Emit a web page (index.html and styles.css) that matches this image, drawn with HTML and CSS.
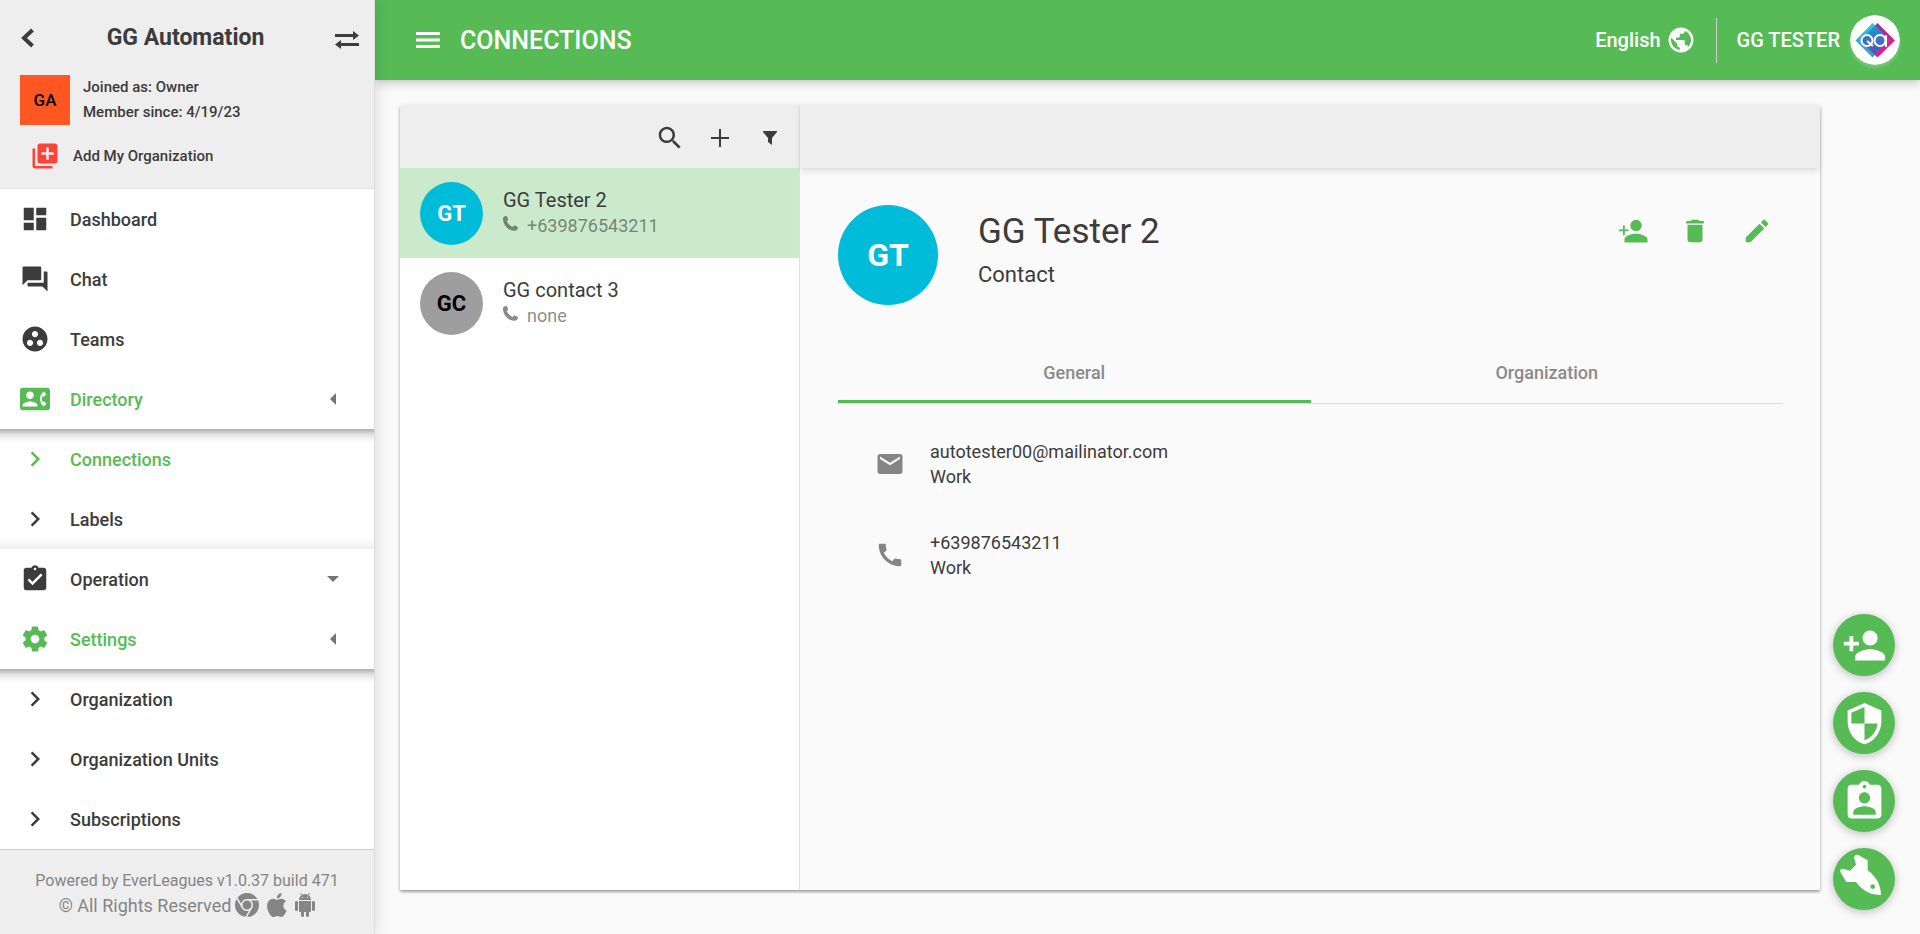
FILE: index.html
```html
<!DOCTYPE html>
<html lang="en">
<head>
<meta charset="utf-8">
<title>Connections</title>
<link rel="stylesheet" href="styles.css">
</head>
<body>
<svg class="defs" aria-hidden="true">
  <symbol id="chevron" viewBox="0 0 24 24"><path d="M8.59 16.59 13.17 12 8.59 7.41 10 6l6 6-6 6z"/></symbol>
  <symbol id="person-add" viewBox="0 0 24 24"><path d="M15 12c2.21 0 4-1.79 4-4s-1.79-4-4-4-4 1.79-4 4 1.79 4 4 4zm-9-2V7H4v3H1v2h3v3h2v-3h3v-2H6zm9 4c-2.67 0-8 1.34-8 4v2h16v-2c0-2.66-5.33-4-8-4z"/></symbol>
  <symbol id="handset" viewBox="0 0 15 15"><path d="M1.200.5 3.200 0c.4-.1.7.1.9.5l1 2.700c.1.4 0 .7-.3 1L3.800 5.300c1.100 2.300 3.100 4.400 5.800 5.700l1.200-1.300c.3-.3.6-.4 1-.2l2.600 1.300c.4.2.6.5.5.9-.3 1.300-1 2.400-2.300 2.800C6.500 16 .2 9.500 0 3.200 0 1.800.3 1 1.200.5z"/></symbol>
</svg>
<div class="app">
  <aside class="sidebar">
    <div class="org">
      <div class="org-top">
        <button class="icon-btn" aria-label="Back"><svg width="16" height="20" viewBox="0 0 16 20"><path d="M12.500 2 4 10l8.500 8" fill="none" stroke="currentColor" stroke-width="4"/></svg></button>
        <h1 class="org-name">GG Automation</h1>
        <button class="icon-btn swap" aria-label="Switch organization"><svg width="24" height="18" viewBox="0 0 24 18"><path d="M0 3h18V0l6 4.500L18 9V6H0zM24 15H6v3l-6-4.500L6 9v3h18z"/></svg></button>
      </div>
      <div class="org-info">
        <div class="org-logo">GA</div>
        <div class="org-meta"><div>Joined as: Owner</div><div>Member since: 4/19/23</div></div>
      </div>
      <button class="add-org"><svg width="30" height="30" viewBox="0 0 24 24"><path d="M4 6H2v14c0 1.100.9 2 2 2h14v-2H4V6zm16-4H8c-1.100 0-2 .9-2 2v12c0 1.100.9 2 2 2h12c1.100 0 2-.9 2-2V4c0-1.100-.9-2-2-2zm-1 9h-4v4h-2v-4H9V9h4V5h2v4h4v2z"/></svg><span>Add My Organization</span></button>
    </div>
    <nav class="nav">
      <a class="nav-item" href="#"><svg class="ico" viewBox="0 0 24 24"><path d="M3 13h8V3H3v10zm0 8h8v-6H3v6zm10 0h8V11h-8v10zm0-18v6h8V3h-8z"/></svg>Dashboard</a>
      <a class="nav-item" href="#"><svg class="ico" viewBox="0 0 24 24"><path d="M21 6h-2v9H6v2c0 .55.45 1 1 1h11l4 4V7c0-.55-.45-1-1-1zm-4 6V3c0-.55-.45-1-1-1H3c-.55 0-1 .45-1 1v14l4-4h10c.55 0 1-.45 1-1z"/></svg>Chat</a>
      <a class="nav-item" href="#"><svg class="ico" viewBox="0 0 24 24"><path d="M12 2C6.480 2 2 6.480 2 12s4.480 10 10 10 10-4.480 10-10S17.520 2 12 2zM8 17.500c-1.380 0-2.500-1.120-2.500-2.500s1.120-2.500 2.500-2.500 2.500 1.120 2.500 2.500-1.120 2.500-2.500 2.500zM9.500 8c0-1.380 1.120-2.500 2.500-2.500s2.500 1.120 2.500 2.500-1.120 2.500-2.500 2.500S9.500 9.380 9.500 8zm6.500 9.500c-1.380 0-2.500-1.120-2.500-2.500s1.120-2.500 2.500-2.500 2.500 1.120 2.500 2.500-1.120 2.500-2.500 2.500z"/></svg>Teams</a>
      <a class="nav-item active" href="#"><svg class="ico" viewBox="0 0 24 24"><path d="M22 3H2C.9 3 0 3.900 0 5v14c0 1.100.9 2 2 2h20c1.100 0 1.990-.9 1.990-2L24 5c0-1.100-.9-2-2-2zM8 6c1.660 0 3 1.340 3 3s-1.340 3-3 3-3-1.340-3-3 1.340-3 3-3zm6 12H2v-1c0-2 4-3.100 6-3.100s6 1.100 6 3.100v1zm3.850-4h1.640L21 16l-1.990 1.990c-1.310-.98-2.280-2.380-2.730-3.990-.18-.64-.28-1.310-.28-2s.1-1.360.28-2c.45-1.620 1.420-3.010 2.730-3.990L21 8l-1.510 2h-1.640c-.22.63-.35 1.300-.35 2s.13 1.370.35 2z"/></svg>Directory<svg class="caret" viewBox="0 0 12 12"><path d="M9 0v12L3 6z"/></svg></a>
      <div class="subnav">
        <a class="nav-item active" href="#"><svg class="ico"><use href="#chevron"/></svg>Connections</a>
        <a class="nav-item" href="#"><svg class="ico"><use href="#chevron"/></svg>Labels</a>
      </div>
      <a class="nav-item" href="#"><svg class="ico" viewBox="0 0 24 24"><path d="M19 3h-4.180C14.400 1.840 13.300 1 12 1c-1.300 0-2.400.84-2.820 2H5c-1.100 0-2 .9-2 2v14c0 1.100.9 2 2 2h14c1.100 0 2-.9 2-2V5c0-1.100-.9-2-2-2zm-7 0c.55 0 1 .45 1 1s-.45 1-1 1-1-.45-1-1 .45-1 1-1zm-2 14-4-4 1.410-1.410L10 14.170l6.590-6.590L18 9l-8 8z"/></svg>Operation<svg class="caret" viewBox="0 0 12 12"><path d="M0 3h12L6 9z"/></svg></a>
      <a class="nav-item active" href="#"><svg class="ico" viewBox="0 0 24 24"><path d="M19.430 12.980c.04-.32.07-.64.07-.98s-.03-.66-.07-.98l2.110-1.650c.19-.15.24-.42.12-.64l-2-3.460c-.12-.22-.39-.3-.61-.22l-2.490 1c-.52-.4-1.080-.73-1.690-.98l-.38-2.650C14.460 2.180 14.250 2 14 2h-4c-.25 0-.46.18-.49.42l-.38 2.650c-.61.25-1.170.59-1.690.98l-2.490-1c-.23-.09-.49 0-.61.22l-2 3.460c-.13.22-.07.49.12.64l2.110 1.650c-.04.32-.07.65-.07.98s.03.66.07.98l-2.110 1.650c-.19.15-.24.42-.12.64l2 3.460c.12.22.39.3.61.22l2.490-1c.52.4 1.080.73 1.690.98l.38 2.650c.03.24.24.42.49.42h4c.25 0 .46-.18.49-.42l.38-2.650c.61-.25 1.170-.59 1.690-.98l2.490 1c.23.09.49 0 .61-.22l2-3.460c.12-.22.07-.49-.12-.64l-2.110-1.650zM12 15.500c-1.930 0-3.500-1.570-3.500-3.500s1.570-3.500 3.500-3.500 3.500 1.570 3.500 3.500-1.570 3.500-3.500 3.500z"/></svg>Settings<svg class="caret" viewBox="0 0 12 12"><path d="M9 0v12L3 6z"/></svg></a>
      <div class="subnav">
        <a class="nav-item" href="#"><svg class="ico"><use href="#chevron"/></svg>Organization</a>
        <a class="nav-item" href="#"><svg class="ico"><use href="#chevron"/></svg>Organization Units</a>
        <a class="nav-item" href="#"><svg class="ico"><use href="#chevron"/></svg>Subscriptions</a>
      </div>
    </nav>
    <footer class="foot">
      <div class="foot-version">Powered by EverLeagues v1.0.37 build 471</div>
      <div class="foot-rights"><span>© All Rights Reserved</span>
        <span class="platforms">
          <svg width="24" height="24" viewBox="4 4 16 16"><path d="M12 20l3.460-6h-.01c.34-.6.55-1.270.55-2 0-1.200-.54-2.270-1.380-3h4.790c.38.930.59 1.940.59 3a8 8 0 0 1-8 8M4 12c0-1.460.39-2.820 1.070-4l3.470 6h.01c.69 1.190 1.950 2 3.450 2 .45 0 .88-.09 1.290-.23l-2.400 4.140C7 19.370 4 16.040 4 12m11 0a3 3 0 1 1-6 0 3 3 0 0 1 6 0m-3-8c2.960 0 5.540 1.610 6.920 4H12c-1.940 0-3.550 1.380-3.920 3.210L5.700 7.080C7.160 5.210 9.440 4 12 4"/></svg>
          <svg width="20" height="24" viewBox="4 2 16.200 20"><path d="M18.710 19.500C17.880 20.740 17 21.950 15.660 21.970C14.320 22 13.890 21.180 12.370 21.180C10.840 21.180 10.370 21.950 9.100 22C7.790 22.050 6.800 20.680 5.960 19.470C4.250 17 2.940 12.450 4.700 9.390C5.570 7.870 7.130 6.910 8.820 6.880C10.100 6.860 11.320 7.750 12.110 7.750C12.890 7.750 14.370 6.680 15.920 6.840C16.570 6.870 18.390 7.100 19.560 8.820C19.470 8.880 17.390 10.100 17.410 12.630C17.440 15.650 20.060 16.660 20.090 16.670C20.060 16.740 19.670 18.110 18.710 19.500M13 3.500C13.730 2.670 14.940 2.040 15.940 2C16.070 3.170 15.600 4.350 14.900 5.190C14.210 6.040 13.070 6.700 11.950 6.610C11.800 5.460 12.360 4.260 13 3.500Z"/></svg>
          <svg width="20" height="24" viewBox="2 0 20 24"><path d="M6 18c0 .55.45 1 1 1h1v3.500c0 .83.67 1.500 1.500 1.500s1.500-.67 1.500-1.500V19h2v3.500c0 .83.67 1.500 1.500 1.500s1.500-.67 1.500-1.500V19h1c.55 0 1-.45 1-1V8H6v10zM3.500 8C2.670 8 2 8.670 2 9.500v7c0 .83.67 1.500 1.500 1.500S5 17.330 5 16.500v-7C5 8.670 4.330 8 3.500 8zm17 0c-.83 0-1.500.67-1.500 1.500v7c0 .83.67 1.500 1.500 1.500s1.500-.67 1.500-1.500v-7c0-.83-.67-1.500-1.500-1.500zm-4.970-5.840l1.300-1.300c.2-.2.2-.51 0-.71-.2-.2-.51-.2-.71 0l-1.480 1.480C13.850 1.230 12.950 1 12 1c-.96 0-1.860.23-2.660.63L7.850.15c-.2-.2-.51-.2-.71 0-.2.2-.2.51 0 .71l1.310 1.310C6.970 3.260 6 5.010 6 7h12c0-1.990-.97-3.750-2.470-4.840zM10 5H9V4h1v1zm5 0h-1V4h1v1z"/></svg>
        </span>
      </div>
    </footer>
  </aside>
  <div class="page">
    <header class="topbar">
      <button class="icon-btn" aria-label="Menu"><svg width="24" height="16" viewBox="0 0 24 16"><path d="M0 0h24v3H0zM0 6.500h24v3H0zM0 13h24v3H0z"/></svg></button>
      <h2 class="page-title">CONNECTIONS</h2>
      <button class="lang">English<svg width="30" height="30" viewBox="0 0 24 24"><path d="M12 2C6.480 2 2 6.480 2 12s4.480 10 10 10 10-4.480 10-10S17.520 2 12 2zm-1 17.930c-3.950-.49-7-3.850-7-7.930 0-.62.08-1.210.21-1.790L9 15v1c0 1.100.9 2 2 2v1.930zm6.900-2.540c-.26-.81-1-1.390-1.900-1.390h-1v-3c0-.55-.45-1-1-1H8v-2h2c.55 0 1-.45 1-1V7h2c1.100 0 2-.9 2-2v-.41c2.930 1.190 5 4.060 5 7.410 0 2.080-.8 3.970-2.100 5.390z"/></svg></button>
      <button class="user"><span>GG TESTER</span>
        <svg class="user-pic" viewBox="0 0 50 50">
          <defs>
            <linearGradient id="lg1" x1="0" y1="0" x2="0" y2="1"><stop offset="0" stop-color="#1fd0e0"/><stop offset="1" stop-color="#4a90c8"/></linearGradient>
            <linearGradient id="lg2" x1="0" y1="0" x2="0" y2="1"><stop offset="0" stop-color="#7b3fa0"/><stop offset=".6" stop-color="#f0148c"/><stop offset="1" stop-color="#f0148c"/></linearGradient>
            <linearGradient id="lg3" x1="0" y1="0" x2="0" y2="1"><stop offset="0" stop-color="#1f97d4"/><stop offset="1" stop-color="#5a4fb0"/></linearGradient>
          </defs>
          <circle cx="25" cy="25" r="25" fill="#fff"/>
          <path d="M27.500 8 45 25.500 27.500 42.500 10.500 25.500z" fill="url(#lg2)"/>
          <path d="M22.500 8 39.500 25.500 22.500 42.500 5.500 25.500z" fill="url(#lg1)"/>
          <path d="M25 10.500 39.500 25.500 25 40 10.500 25.500z" fill="url(#lg3)"/>
          <g fill="none" stroke="#fff" stroke-width="2"><circle cx="17" cy="25.500" r="5.500"/><path d="m17 26 6 5"/><circle cx="30" cy="25.500" r="5.500"/><path d="M36 20v12"/></g>
        </svg>
      </button>
    </header>
    <main class="content">
      <div class="card">
        <section class="list">
          <div class="list-bar">
            <button class="icon-btn" aria-label="Search"><svg width="30" height="30" viewBox="0 0 24 24"><path d="M15.500 14h-.79l-.28-.27C15.410 12.590 16 11.110 16 9.500 16 5.910 13.090 3 9.500 3S3 5.910 3 9.500 5.910 16 9.500 16c1.610 0 3.090-.59 4.230-1.570l.27.28v.79l5 4.990L20.490 19l-4.990-5zm-6 0C7.010 14 5 11.990 5 9.500S7.010 5 9.500 5 14 7.010 14 9.500 11.990 14 9.500 14z"/></svg></button>
            <button class="icon-btn" aria-label="Add"><svg width="30" height="30" viewBox="0 0 30 30"><path d="M14 6h2v8h8v2h-8v8h-2v-8H6v-2h8z"/></svg></button>
            <button class="icon-btn" aria-label="Filter"><svg width="30" height="30" viewBox="0 0 30 30"><path d="M8 8h14v1l-5 6v7l-4-3v-4L8 9z"/></svg></button>
          </div>
          <a class="contact selected" href="#">
            <span class="avatar">GT</span>
            <span class="contact-text"><span class="contact-name">GG Tester 2</span><span class="contact-phone"><svg width="15" height="15"><use href="#handset"/></svg>+639876543211</span></span>
          </a>
          <a class="contact" href="#">
            <span class="avatar grey">GC</span>
            <span class="contact-text"><span class="contact-name">GG contact 3</span><span class="contact-phone"><svg width="15" height="15"><use href="#handset"/></svg>none</span></span>
          </a>
        </section>
        <section class="detail">
          <div class="detail-bar"></div>
          <div class="detail-body">
            <div class="profile">
              <div class="avatar big">GT</div>
              <div class="profile-text"><h3 class="profile-name">GG Tester 2</h3><div class="profile-kind">Contact</div></div>
              <div class="actions">
                <button class="icon-btn" aria-label="Add person"><svg width="30" height="30" viewBox="0 0 30 30"><circle cx="18" cy="9.500" r="5.700"/><path d="M6.500 26.500v-3c0-3.800 7.600-5.700 11.500-5.700s11.500 1.900 11.500 5.700v3zM5 9.500h1.800v4h3.700v1.800H6.800v4H5v-4H1v-1.800h4z"/></svg></button>
                <button class="icon-btn" aria-label="Delete"><svg width="30" height="30" viewBox="0 0 24 24"><path d="M6 19c0 1.100.9 2 2 2h8c1.100 0 2-.9 2-2V7H6v12zM19 4h-3.500l-1-1h-5l-1 1H5v2h14V4z"/></svg></button>
                <button class="icon-btn" aria-label="Edit"><svg width="30" height="30" viewBox="0 0 24 24"><path d="M3 17.250V21h3.750L17.810 9.940l-3.750-3.750L3 17.250zM20.710 7.040c.39-.39.39-1.020 0-1.410l-2.340-2.340c-.39-.39-1.020-.39-1.410 0l-1.830 1.830 3.750 3.750 1.830-1.830z"/></svg></button>
              </div>
            </div>
            <div class="tabs" role="tablist">
              <button class="tab current" role="tab" aria-selected="true">General</button>
              <button class="tab" role="tab" aria-selected="false">Organization</button>
            </div>
            <div class="fields">
              <div class="field"><svg width="30" height="30" viewBox="0 0 24 24"><path d="M20 4H4c-1.100 0-1.990.9-1.990 2L2 18c0 1.100.9 2 2 2h16c1.100 0 2-.9 2-2V6c0-1.100-.9-2-2-2zm0 4-8 5-8-5V6l8 5 8-5v2z"/></svg><div><div>autotester00@mailinator.com</div><div>Work</div></div></div>
              <div class="field"><svg width="30" height="30" viewBox="0 0 24 24"><path d="M20.010 15.380c-1.230 0-2.420-.2-3.530-.56-.35-.12-.74-.03-1.010.24l-1.570 1.970c-2.830-1.350-5.480-3.900-6.890-6.830l1.950-1.660c.27-.28.35-.67.24-1.020-.37-1.110-.56-2.300-.56-3.530 0-.54-.45-.99-.99-.99H4.190C3.650 3 3 3.240 3 3.990 3 13.280 10.730 21 20.010 21c.71 0 .99-.63.99-1.180v-3.450c0-.54-.45-.99-.99-.99z"/></svg><div><div>+639876543211</div><div>Work</div></div></div>
            </div>
          </div>
        </section>
      </div>
    </main>
  </div>
</div>
<div class="fabs">
  <button class="fab" aria-label="Add contact"><svg width="45" height="45"><use href="#person-add"/></svg></button>
  <button class="fab" aria-label="Security"><svg width="45" height="45" viewBox="0 0 24 24"><path d="M12 1 3 5v6c0 5.550 3.840 10.740 9 12 5.160-1.260 9-6.450 9-12V5l-9-4zm0 10.990h7c-.53 4.120-3.280 7.790-7 8.940V12H5V6.300l7-3.110v8.800z"/></svg></button>
  <button class="fab" aria-label="Assignments"><svg width="45" height="45" viewBox="0 0 24 24"><path d="M19 3h-4.180C14.400 1.840 13.300 1 12 1c-1.300 0-2.400.84-2.820 2H5c-1.100 0-2 .9-2 2v14c0 1.100.9 2 2 2h14c1.100 0 2-.9 2-2V5c0-1.100-.9-2-2-2zm-7 0c.55 0 1 .45 1 1s-.45 1-1 1-1-.45-1-1 .45-1 1-1zm0 4c1.660 0 3 1.340 3 3s-1.340 3-3 3-3-1.340-3-3 1.340-3 3-3zm6 12H6v-1.400c0-2 4-3.100 6-3.100s6 1.100 6 3.100V19z"/></svg></button>
  <button class="fab" aria-label="Launch"><svg width="62" height="62" viewBox="0 0 186 186"><path fill-rule="evenodd" d="M76 21 104 37v30c24 18 40 42 40 74-30 0-54-10-75-39H40L22 72q-2-9 7-10l22 6 18-18-6-22q2-10 13-7zM119 109a7 7 0 1 0 .1 0z"/></svg></button>
</div>
</body>
</html>
```
FILE: styles.css
```css
* { box-sizing: border-box; }
body { margin: 0; font-family: Roboto, "Liberation Sans", sans-serif; font-size: 18px; color: #3c3c3c; background: #fafafa; }
h1, h2, h3 { margin: 0; }
svg { fill: currentColor; flex: none; display: block; }
button { font: inherit; color: inherit; background: none; border: 0; padding: 0; }
a { color: inherit; text-decoration: none; }
.defs { position: absolute; width: 0; height: 0; }
.icon-btn { display: flex; }

.app { display: flex; min-height: 100vh; }

.sidebar { width: 375px; flex: none; display: flex; flex-direction: column; background: #fff; border-right: 1px solid #ddd; box-shadow: 0 0 16px rgba(0, 0, 0, .14); z-index: 2; }
.org { height: 189px; background: #eee; border-bottom: 1px solid #e0e0e0; padding: 20px 15px 0 20px; }
.org-top { display: flex; align-items: center; justify-content: space-between; height: 35px; }
.org-name { font-size: 23px; line-height: 35px; font-weight: 700; }
.swap { padding-top: 4px; }
.org-info { display: flex; gap: 13px; margin-top: 20px; font-size: 15px; line-height: 25px; font-weight: 500; }
.org-logo { width: 50px; height: 50px; background: #ff5722; color: #000; font-size: 17px; display: flex; align-items: center; justify-content: center; }
.add-org { display: flex; align-items: center; gap: 13px; margin: 16px 0 0 10px; font-size: 15px; font-weight: 500; }
.add-org svg { color: #ff4136; }

.nav { flex: 1; font-weight: 500; }
.nav-item { display: flex; align-items: center; gap: 20px; height: 60px; padding: 0 35px 0 20px; }
.nav-item.active { color: #56bb54; }
.ico { width: 30px; height: 30px; }
.caret { width: 12px; height: 12px; margin-left: auto; color: #757575; }
.subnav { background: linear-gradient(#adadad, #dedede 5px, #f6f6f6 10px, rgba(255, 255, 255, 0) 15px), linear-gradient(to top, #efefef, #fff 12px); }
.subnav:last-child { background: linear-gradient(#adadad, #dedede 5px, #f6f6f6 10px, #fff 15px); }

.foot { background: #eee; border-top: 1px solid #d0d0d0; color: #858585; height: 86px; padding-top: 18px; text-align: center; }
.foot-version { font-size: 16px; line-height: 25px; }
.foot-rights { display: flex; justify-content: center; gap: 4px; line-height: 25px; }
.platforms { display: flex; gap: 8px; }

.page { flex: 1; min-width: 0; display: flex; flex-direction: column; }
.topbar { height: 80px; background: #56bb54; color: #fff; display: flex; align-items: center; padding: 0 20px 0 41px; font-size: 20px; font-weight: 500; box-shadow: 0 2px 10px rgba(0, 0, 0, .25); }
.page-title { font-size: 25px; font-weight: 500; margin-left: 20px; }
.lang { display: flex; align-items: center; gap: 5px; margin-left: auto; padding-right: 20px; }
.user { display: flex; align-items: center; gap: 10px; }
.lang + .user { position: relative; padding-left: 21px; }
.lang + .user::before { content: ""; position: absolute; left: 0; top: 3px; width: 1px; height: 45px; background: #d0cfd0; }
.user-pic { width: 50px; height: 50px; border-radius: 50%; box-shadow: 0 3px 3px rgba(255, 255, 255, .2); }

.content { flex: 1; display: flex; padding: 25px 100px 45px 25px; }
.card { flex: 1; display: flex; border-radius: 2px; box-shadow: 0 2px 3px rgba(0, 0, 0, .35), 0 0 4px rgba(0, 0, 0, .08); }
.list { width: 400px; flex: none; background: #fff; border-right: 1px solid #e0e0e0; }
.list-bar { height: 63px; background: #eee; display: flex; align-items: center; justify-content: flex-end; gap: 20px; padding: 2px 14px 0 0; }
.contact { display: flex; align-items: center; gap: 20px; height: 90px; padding-left: 20px; }
.contact.selected { background: #cbeacb; }
.avatar { width: 63px; height: 63px; border-radius: 50%; background: #00bcd8; color: #fff; font-size: 22px; font-weight: 700; display: flex; align-items: center; justify-content: center; flex: none; }
.avatar.grey { background: #9e9e9e; color: #000; }
.avatar.big { width: 100px; height: 100px; font-size: 32px; }
.contact-text { display: flex; flex-direction: column; line-height: 25px; }
.contact-name { font-size: 20px; }
.contact-phone { display: flex; gap: 9px; color: rgba(60, 60, 60, .6); }
.contact-phone svg { margin-top: 3px; }

.detail { flex: 1; min-width: 0; background: #fafafa; }
.detail-bar { height: 63px; background: #eee; box-shadow: 0 4px 6px -1px rgba(0, 0, 0, .12); }
.detail-body { padding: 37px 37px 0 38px; }
.profile { display: flex; gap: 40px; }
.profile-text { flex: 1; padding-top: 5px; }
.profile-name { font-size: 35px; line-height: 44px; font-weight: 400; }
.profile-kind { font-size: 22px; line-height: 42px; }
.actions { display: flex; gap: 32px; color: #56bb54; padding: 11px 11px 0 0; height: 41px; }
.tabs { display: flex; margin-top: 37px; border-bottom: 1px solid #ddd; }
.tab { flex: 1; height: 61px; padding-top: 2px; color: #8a8a8a; font-weight: 500; border-bottom: 3px solid transparent; }
.tab.current { border-bottom-color: #56bb54; }
.fields { padding: 35px 0 0 37px; line-height: 25px; display: flex; flex-direction: column; gap: 41px; }
.field { display: flex; align-items: center; gap: 25px; }
.field svg { color: #858585; }

.fabs { position: fixed; right: 25px; bottom: 24px; display: flex; flex-direction: column; gap: 16px; z-index: 3; }
.fab { width: 62px; height: 62px; border-radius: 50%; background: #56bb54; color: #fff; display: flex; align-items: center; justify-content: center; box-shadow: 0 2px 10px rgba(0, 0, 0, .25); }
```
